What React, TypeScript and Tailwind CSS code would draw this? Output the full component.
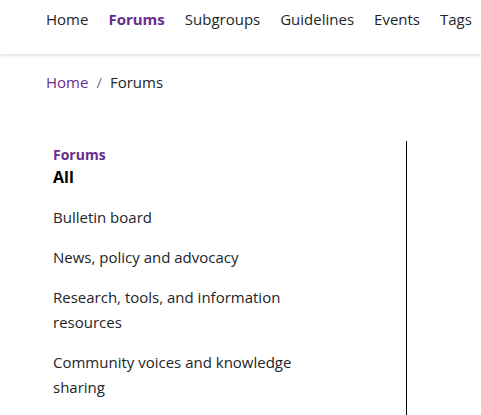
const navItems = ["Home", "Forums", "Subgroups", "Guidelines", "Events", "Tags"];

const forums = [
  "Bulletin board",
  "News, policy and advocacy",
  "Research, tools, and information resources",
  "Community voices and knowledge sharing",
];

export default function App() {
  return (
    <div className="min-h-screen bg-white text-[#212529] [font-family:'Open_Sans',sans-serif]">
      <header className="h-[54px] bg-white shadow-[0_1px_3px_rgba(0,0,0,0.18)]">
        <nav className="flex gap-5 pl-[46px] pt-[7px] text-[15px] leading-6">
          {navItems.map((item) => (
            <a
              key={item}
              href="#"
              className={
                item === "Forums"
                  ? "font-bold text-[#662d8c]"
                  : "text-[#212529]"
              }
            >
              {item}
            </a>
          ))}
        </nav>
      </header>

      <div className="flex items-center gap-2 pl-[46px] pt-[16px] text-[15px] leading-6">
        <a href="#" className="text-[#662d8c]">
          Home
        </a>
        <span className="text-[#6c757d]">/</span>
        <span>Forums</span>
      </div>

      <div className="mt-[47px] flex pl-[46px]">
        <aside className="min-h-[300px] w-[361px] border-r border-black pl-[7px] pt-[4px]">
          <h2 className="text-[14px] font-bold leading-5 text-[#662d8c]">
            Forums
          </h2>
          <h3 className="text-[16px] font-bold leading-6 text-black">All</h3>
          <ul className="mt-[16px] flex flex-col gap-[15px] text-[15px] leading-[25px]">
            {forums.map((f) => (
              <li key={f} className="w-[262px]">
                {f}
              </li>
            ))}
          </ul>
        </aside>
      </div>
    </div>
  );
}
